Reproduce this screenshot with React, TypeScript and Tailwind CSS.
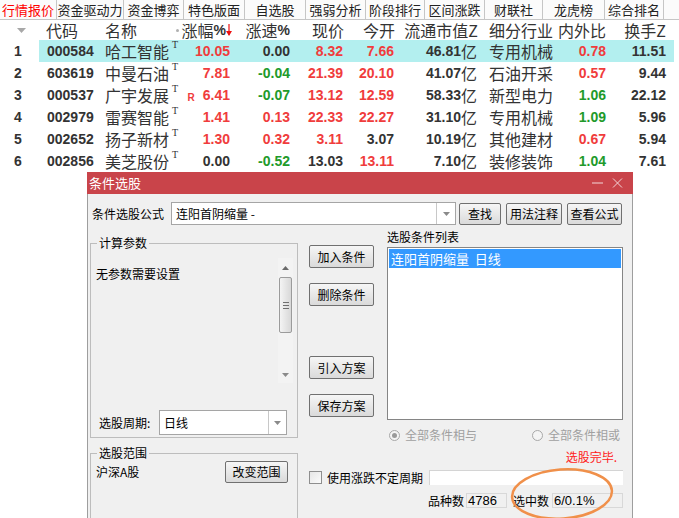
import React from "react";

const CJK = "font-['Noto_Sans_CJK_SC',sans-serif]";
const NUM = "font-['Liberation_Sans','Noto_Sans_CJK_SC',sans-serif]";

type C = "r" | "g" | "k";
const COLOR: Record<C, string> = {
  r: "text-[#f03c3c]",
  g: "text-[#219a2a]",
  k: "text-[#333333]",
};

type Cell = [string, C];
type Row = {
  code: string;
  name: string;
  chg: Cell;
  spd: Cell;
  price: Cell;
  open: Cell;
  cap: string;
  ind: string;
  ratio: Cell;
  turn: string;
  r?: boolean;
};

const rows: Row[] = [
  { code: "000584", name: "哈工智能", chg: ["10.05", "r"], spd: ["0.00", "k"], price: ["8.32", "r"], open: ["7.66", "r"], cap: "46.81", ind: "专用机械", ratio: ["0.78", "r"], turn: "11.51" },
  { code: "603619", name: "中曼石油", chg: ["7.81", "r"], spd: ["-0.04", "g"], price: ["21.39", "r"], open: ["20.10", "r"], cap: "41.07", ind: "石油开采", ratio: ["0.57", "r"], turn: "9.44" },
  { code: "000537", name: "广宇发展", chg: ["6.41", "r"], spd: ["-0.07", "g"], price: ["13.12", "r"], open: ["12.59", "r"], cap: "58.33", ind: "新型电力", ratio: ["1.06", "g"], turn: "22.12", r: true },
  { code: "002979", name: "雷赛智能", chg: ["1.41", "r"], spd: ["0.13", "r"], price: ["22.33", "r"], open: ["22.27", "r"], cap: "31.10", ind: "专用机械", ratio: ["1.09", "g"], turn: "5.96" },
  { code: "002652", name: "扬子新材", chg: ["1.30", "r"], spd: ["0.32", "r"], price: ["3.11", "r"], open: ["3.07", "k"], cap: "10.19", ind: "其他建材", ratio: ["0.67", "r"], turn: "5.94" },
  { code: "002856", name: "美芝股份", chg: ["0.00", "k"], spd: ["-0.52", "g"], price: ["13.03", "k"], open: ["13.11", "r"], cap: "7.10", ind: "装修装饰", ratio: ["1.04", "g"], turn: "7.61" },
];

const tabs: [string, number][] = [
  ["行情报价", 57],
  ["资金驱动力", 67],
  ["资金博弈", 60],
  ["特色版面", 61],
  ["自选股", 61],
  ["强弱分析", 60],
  ["阶段排行", 59],
  ["区间涨跌", 60],
  ["财联社", 58],
  ["龙虎榜", 62],
  ["综合排名", 59],
];

function Num({ v, c, cls }: { v: string; c: C; cls: string }) {
  return (
    <div className={`${cls} shrink-0 flex items-center justify-end ${NUM} font-bold text-[14px] ${COLOR[c]}`}>
      {v}
    </div>
  );
}

function Btn({ label, cls }: { label: string; cls: string }) {
  return (
    <div
      className={`${cls} flex items-center justify-center border border-[#707070] rounded-[2px] bg-linear-to-b from-[#f6f6f6] to-[#dadada] text-[12px] text-black`}
    >
      {label}
    </div>
  );
}

function Arrow() {
  return (
    <svg width="7" height="4" viewBox="0 0 7 4">
      <path d="M0 0h7L3.5 4z" fill="#8a8a8a" />
    </svg>
  );
}

function Group({ title, cls, children }: { title: string; cls: string; children: React.ReactNode }) {
  return (
    <div className={`${cls} relative border border-[#bdbdbd]`}>
      <span className="absolute left-[6px] -top-[8px] px-[2px] bg-[#f0f0f0] text-[12px] leading-[14px] text-black">
        {title}
      </span>
      {children}
    </div>
  );
}

function Scrollbar() {
  return (
    <div className="w-[15px] h-full bg-[#f3f3f3] flex flex-col items-center">
      <div className="h-[19px] flex items-center justify-center">
        <svg width="7" height="4" viewBox="0 0 7 4">
          <path d="M0 4h7L3.5 0z" fill="#6a6a6a" />
        </svg>
      </div>
      <div className="w-[13px] h-[56px] rounded-[2px] border border-[#9b9b9b] bg-linear-to-r from-[#f4f4f4] to-[#d8d8d8] flex flex-col items-center justify-center gap-[2px]">
        <div className="w-[6px] h-px bg-[#6f6f6f]" />
        <div className="w-[6px] h-px bg-[#6f6f6f]" />
        <div className="w-[6px] h-px bg-[#6f6f6f]" />
      </div>
      <div className="flex-1" />
      <div className="h-[16px] flex items-center justify-center">
        <Arrow />
      </div>
    </div>
  );
}

function Dialog() {
  return (
    <div className={`absolute left-[87px] top-[172px] w-[546px] ${CJK}`}>
      <div className="h-[22px] bg-[#c9444a] flex items-center pl-[2px] text-white text-[13px]">
        <span>条件选股</span>
        <svg className="ml-auto" width="40" height="12" viewBox="0 0 40 12">
          <path d="M4 6h11" stroke="#f3d6d8" strokeWidth="1" />
          <path d="M25 1.5l9 9M34 1.5l-9 9" stroke="#f3d6d8" strokeWidth="1" />
        </svg>
        <span className="w-[5px]" />
      </div>
      <div className="h-[340px] bg-[#f0f0f0] border-x border-[#9e9e9e] text-[12px] text-black">
        <div className="pt-[8px] flex items-center">
          <div className="w-[83px] pl-[4px]">条件选股公式</div>
          <div className="w-[285px] h-[23px] bg-white border border-[#a5a5a5] flex items-center">
            <div className="flex-1 pl-[4px]">连阳首阴缩量 -</div>
            <div className="w-[19px] h-full border-l border-[#c8c8c8] flex items-center justify-center">
              <Arrow />
            </div>
          </div>
          <Btn label="查找" cls="ml-[3px] w-[42px] h-[22px]" />
          <Btn label="用法注释" cls="ml-[5px] w-[56px] h-[22px]" />
          <Btn label="查看公式" cls="ml-[5px] w-[55px] h-[22px]" />
        </div>

        <div className="flex">
          <div className="ml-[2px] w-[208px]">
            <Group title="计算参数" cls="mt-[18px] h-[195px]">
              <div className="mt-[14px] h-[125px] w-[202px] flex">
                <div className="flex-1 pl-[5px] pt-[7px]">无参数需要设置</div>
                <Scrollbar />
              </div>
              <div className="mt-[27px] h-[25px] flex items-center">
                <div className="w-[68px] pl-[8px]">选股周期:</div>
                <div className="w-[128px] h-[25px] bg-white border border-[#a5a5a5] flex items-center">
                  <div className="flex-1 pl-[4px]">日线</div>
                  <div className="w-[18px] h-full border-l border-[#c8c8c8] flex items-center justify-center">
                    <Arrow />
                  </div>
                </div>
              </div>
            </Group>
            <Group title="选股范围" cls="mt-[15px] h-[100px]">
              <div className="pt-[7px] pl-[5px] pr-[9px] flex items-center justify-between">
                <span>沪深A股</span>
                <Btn label="改变范围" cls="w-[63px] h-[22px]" />
              </div>
            </Group>
          </div>

          <div className="ml-[11px] w-[314px] flex flex-col">
            <div className="flex">
              <div className="w-[65px] flex flex-col">
                <Btn label="加入条件" cls="mt-[20px] h-[23px]" />
                <Btn label="删除条件" cls="mt-[15px] h-[23px]" />
                <Btn label="引入方案" cls="mt-[50px] h-[23px]" />
                <Btn label="保存方案" cls="mt-[15px] h-[23px]" />
              </div>
              <div className="ml-[13px] w-[236px] flex flex-col">
                <div className="mt-[4px] h-[16px] leading-[16px]">选股条件列表</div>
                <div className="mt-[2px] h-[173px] bg-white border border-[#858585]">
                  <div className="m-px h-[19px] bg-[#3399ff] text-white text-[13px] flex items-center pl-[2px] whitespace-pre">
                    连阳首阴缩量  日线
                  </div>
                </div>
                <div className="mt-[8px] h-[14px] flex items-center text-[#a0a0a0]">
                  <div className="ml-[2px] w-[11px] h-[11px] rounded-full border border-[#a8a8a8] bg-[#f4f4f4] flex items-center justify-center">
                    <div className="w-[5px] h-[5px] rounded-full bg-[#9a9a9a]" />
                  </div>
                  <span className="ml-[5px]">全部条件相与</span>
                  <div className="ml-[55px] w-[11px] h-[11px] rounded-full border border-[#a8a8a8] bg-[#f4f4f4]" />
                  <span className="ml-[5px]">全部条件相或</span>
                </div>
                <div className="mt-[8px] h-[14px] leading-[14px] text-right pr-[6px] text-[#ff1a1a]">选股完毕.</div>
              </div>
            </div>
            <div className="mt-[6px] h-[15px] flex items-center">
              <div className="w-[13px] h-[13px] border border-[#8e8e8e] bg-linear-to-br from-[#e6e6e6] to-[#fbfbfb]" />
              <span className="ml-[5px]">使用涨跌不定周期</span>
              <div className="ml-auto w-[194px] h-[15px] bg-white border-l border-t border-[#d4d4d4]" />
            </div>
            <div className="mt-[8px] h-[15px] flex items-center justify-end">
              <span>品种数</span>
              <div className={`ml-[2px] w-[41px] h-[15px] border border-[#d8d8d8] flex items-center pl-px ${NUM} text-[13px]`}>4786</div>
              <span className="ml-[6px]">选中数</span>
              <div className={`ml-[3px] w-[71px] h-[15px] border border-[#d8d8d8] flex items-center pl-px ${NUM} text-[13px]`}>6/0.1%</div>
            </div>
          </div>
        </div>
      </div>
    </div>
  );
}

export default function App() {
  return (
    <div className={`relative w-[679px] h-[518px] overflow-hidden bg-white ${CJK}`}>
      <div className="flex h-[20px] border-b border-[#c6c6c6] bg-[#fbfbfb]">
        {tabs.map(([t, w], i) => (
          <div
            key={t}
            style={{ width: w }}
            className={`shrink-0 whitespace-nowrap border-r border-[#c6c6c6] flex items-center justify-center text-[13px] ${i === 0 ? "text-[#ff0000]" : "text-[#222222]"}`}
          >
            {t}
          </div>
        ))}
      </div>

      <div className="flex h-[20px] items-center text-[16px] leading-none text-[#333333] whitespace-nowrap">
        <div className="w-[39px] shrink-0 pl-[17px] flex items-center">
          <svg width="9" height="5" viewBox="0 0 9 5">
            <path d="M0 0h9L4.5 5z" fill="#a8a8a8" />
          </svg>
        </div>
        <div className="w-[59px] shrink-0 pl-[7px]">代码</div>
        <div className="w-[78px] shrink-0 pl-[7px]">名称</div>
        <div className="w-[56px] shrink-0 flex items-center justify-end">
          <span className="mr-auto w-[3px] h-[3px] rounded-full bg-[#b0b0b0]" />
          <span>涨幅</span>
          <span className={`${NUM} font-bold text-[14px]`}>%</span>
          <svg width="6" height="12" viewBox="0 0 6 12">
            <path d="M3 0v11" stroke="#ee1111" strokeWidth="1.2" />
            <path d="M0 7l3 5 3-5z" fill="#ee1111" />
          </svg>
        </div>
        <div className="w-[60px] shrink-0 pr-[2px] flex justify-end items-center">
          <span>涨速</span>
          <span className={`${NUM} font-bold text-[14px]`}>%</span>
        </div>
        <div className="w-[53px] shrink-0 pr-[1px] text-right">现价</div>
        <div className="w-[51px] shrink-0 pr-[1px] text-right">今开</div>
        <div className="w-[83px] shrink-0 pr-[1px] text-right">流通市值Z</div>
        <div className="w-[76px] shrink-0 pl-[10px]">细分行业</div>
        <div className="w-[53px] shrink-0 pr-[2px] text-right">内外比</div>
        <div className="w-[60px] shrink-0 pr-[2px] text-right">换手Z</div>
      </div>

      {rows.map((r, i) => (
        <div key={r.code} className="flex h-[22px] items-stretch leading-none whitespace-nowrap">
          <div className={`w-[39px] shrink-0 pl-[14px] flex items-center ${NUM} font-bold text-[14px] text-[#333333]`}>{i + 1}</div>
          <div className={`w-[635px] shrink-0 flex items-stretch ${i === 0 ? "bg-[#b3efef]" : ""}`}>
            <div className={`w-[59px] shrink-0 pl-[8px] flex items-center ${NUM} font-bold text-[14px] text-[#333333]`}>{r.code}</div>
            <div className="w-[78px] shrink-0 pl-[7px] flex items-center text-[16px] text-[#333333]">
              <span className="shrink-0">{r.name}</span>
              <span className="shrink-0 ml-[3px] relative -top-[6px] font-['Liberation_Serif',serif] text-[10px]">T</span>
            </div>
            <div className={`w-[56px] shrink-0 pr-[2px] flex items-center justify-end ${NUM} font-bold text-[14px] ${COLOR[r.chg[1]]}`}>
              {r.r && <span className="mr-[8px] relative top-[3px] text-[10px] text-[#f03c3c]">R</span>}
              {r.chg[0]}
            </div>
            <Num v={r.spd[0]} c={r.spd[1]} cls="w-[60px] pr-[2px]" />
            <Num v={r.price[0]} c={r.price[1]} cls="w-[53px] pr-[2px]" />
            <Num v={r.open[0]} c={r.open[1]} cls="w-[51px] pr-[2px]" />
            <div className="w-[83px] shrink-0 pr-[2px] flex items-center justify-end text-[#333333]">
              <span className={`${NUM} font-bold text-[14px]`}>{r.cap}</span>
              <span className="text-[16px]">亿</span>
            </div>
            <div className="w-[76px] shrink-0 pl-[10px] flex items-center text-[16px] text-[#333333]">{r.ind}</div>
            <Num v={r.ratio[0]} c={r.ratio[1]} cls="w-[53px] pr-[2px]" />
            <Num v={r.turn} c="k" cls="w-[60px] pr-[2px]" />
          </div>
        </div>
      ))}

      <Dialog />

      <svg className="absolute left-[506px] top-[464px] pointer-events-none" width="114" height="60" viewBox="0 0 114 60">
        <ellipse cx="56" cy="30" rx="50" ry="24.5" fill="none" stroke="#f0904a" strokeWidth="2.5" transform="rotate(-4 56 30)" />
      </svg>
    </div>
  );
}
